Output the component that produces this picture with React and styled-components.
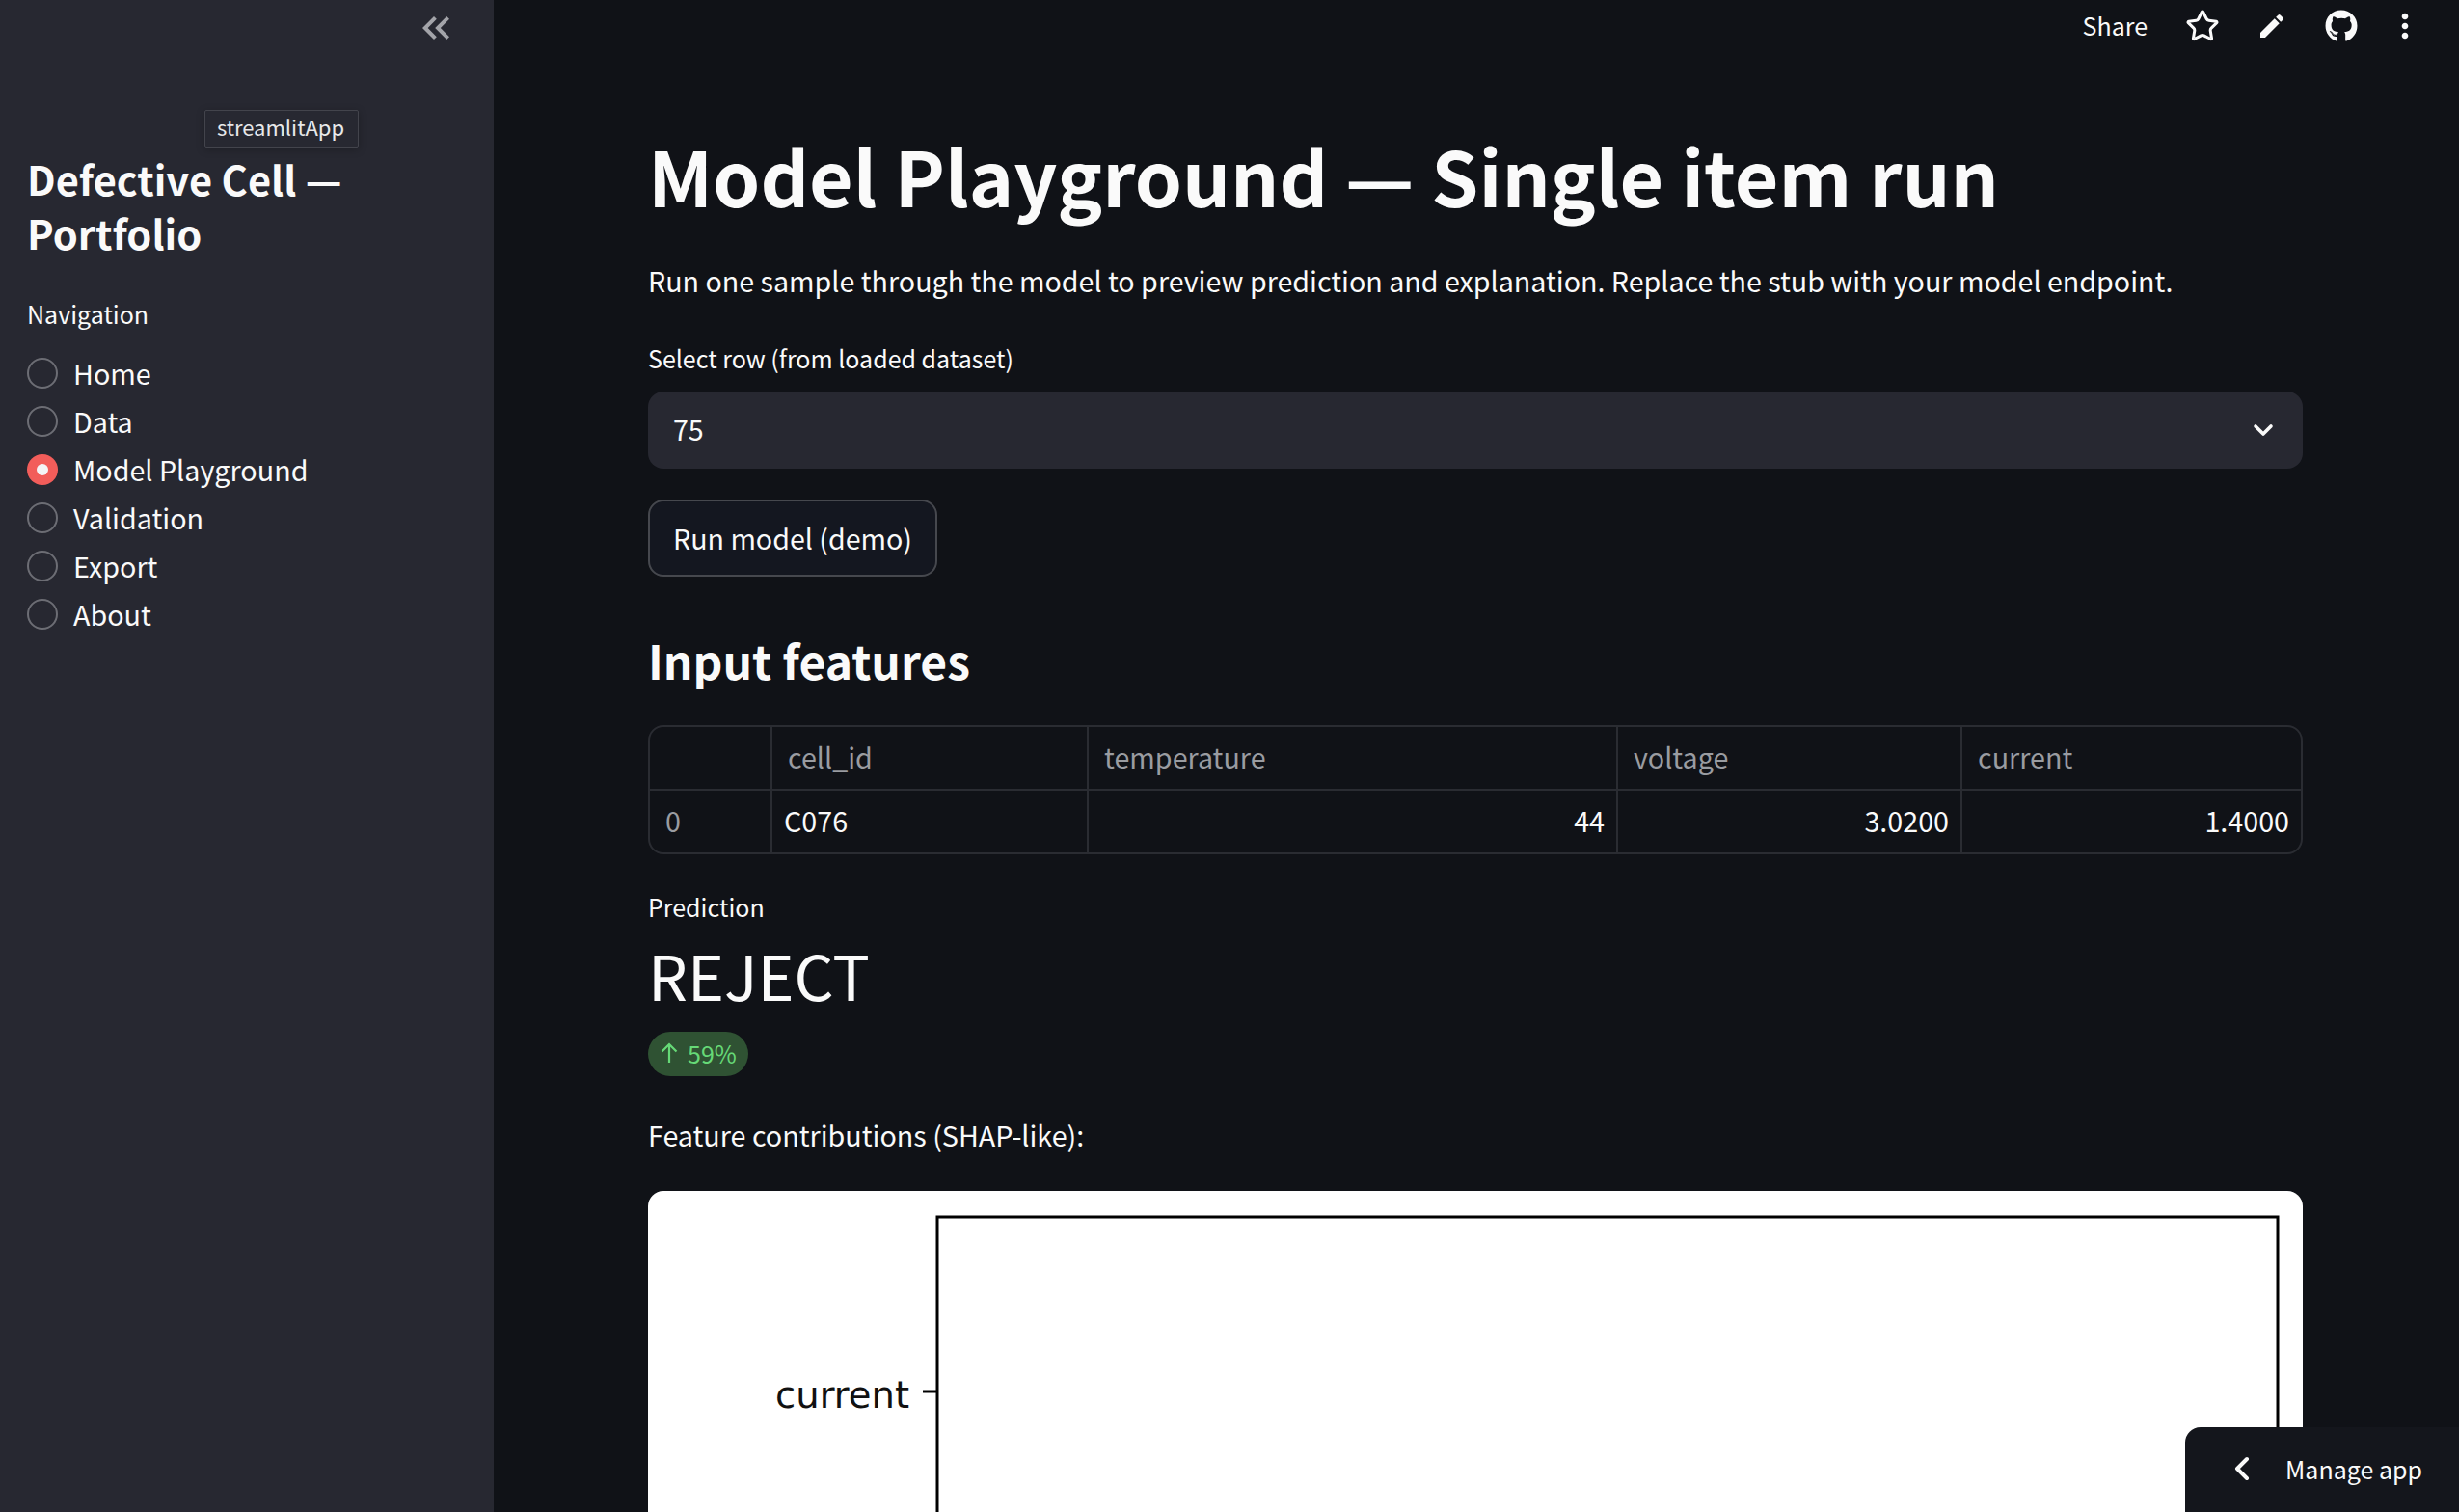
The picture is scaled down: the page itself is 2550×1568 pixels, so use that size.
import React from "react";
import styled, { createGlobalStyle } from "styled-components";
import { MdEdit, MdMoreVert, MdKeyboardDoubleArrowLeft } from "react-icons/md";
import { FaGithub } from "react-icons/fa";
import { Star } from "lucide-react";

const FONT = `"Noto Sans CJK SC", "Source Sans Pro", "Noto Sans", sans-serif`;

const Global = createGlobalStyle`
  html, body { margin: 0; padding: 0; background: #101217; height: 100%; overflow: hidden; }
  * { box-sizing: border-box; }
`;

const Shell = styled.div`
  display: flex;
  position: relative;
  width: 2550px;
  height: 1568px;
  overflow: hidden;
  background: #101217;
  color: #fafafa;
  font-family: ${FONT};
`;

const Sidebar = styled.aside`
  width: 512px;
  flex: none;
  background: #272831;
  padding: 12px 28px 0;
  display: flex;
  flex-direction: column;
  position: relative;
`;

const Collapse = styled.div`
  display: flex;
  justify-content: flex-end;
  padding-right: 8px;
  color: #a3a4a9;
  height: 34px;
  font-size: 48px;
  line-height: 0;
  align-items: center;
  flex: none;
`;

const Tip = styled.div`
  position: absolute;
  left: 212px;
  top: 114px;
  width: 160px;
  height: 39px;
  background: #272831;
  border: 1px solid #43444c;
  border-radius: 2px;
  box-shadow: 0 2px 8px rgba(0,0,0,.25);
  font-size: 22px;
  line-height: 33px;
  text-align: center;
  color: #e8e8ea;
  padding-right: 2px;
`;

const Brand = styled.h2`
  margin: 111px 0 0;
  font-size: 41.6px;
  line-height: 56px;
  font-weight: 600;
  color: #fafafa;
`;

const NavLabel = styled.div`
  margin-top: 38px;
  font-size: 25px;
  line-height: 36px;
  color: #fafafa;
`;

const Radios = styled.div`
  margin-top: 19px;
  display: flex;
  flex-direction: column;
`;

const RadioRow = styled.div`
  display: flex;
  align-items: center;
  gap: 16px;
  height: 50px;
  font-size: 28.7px;
  line-height: 40px;
`;

const Dot = styled.span`
  width: 32px;
  height: 32px;
  border-radius: 50%;
  flex: none;
  display: flex;
  align-items: center;
  justify-content: center;
  background: ${p => (p.$on ? "#f25d5a" : "transparent")};
  border: ${p => (p.$on ? "none" : "2px solid #6c6d74")};
  &::after {
    content: "";
    display: ${p => (p.$on ? "block" : "none")};
    width: 12px;
    height: 12px;
    border-radius: 50%;
    background: #f4f4f6;
  }
`;

const Main = styled.main`
  flex: 1;
  min-width: 0;
  display: flex;
  flex-direction: column;
`;

const Toolbar = styled.header`
  height: 54px;
  flex: none;
  display: flex;
  align-items: center;
  justify-content: flex-end;
  padding-right: 44px;
  color: #fafafa;
`;

const ShareText = styled.span`
  font-size: 25px;
  line-height: 34px;
  margin: 0 39px 2px 0;
`;

const ToolIcon = styled.span`
  display: flex;
  align-items: center;
  justify-content: center;
  width: ${p => p.$w}px;
  margin-right: ${p => p.$mr}px;
  font-size: ${p => p.$size}px;
  svg { flex: none; }
`;

const Content = styled.div`
  padding: 0 162px 0 160px;
  display: flex;
  flex-direction: column;
  flex: none;
`;

const Title = styled.h1`
  margin: 83px 0 0;
  font-size: 78.7px;
  line-height: 88px;
  font-weight: 600;
  white-space: nowrap;
`;

const Lead = styled.p`
  margin: 44px 0 0;
  font-size: 28.65px;
  line-height: 44px;
  white-space: nowrap;
`;

const FieldLabel = styled.div`
  margin-top: 40px;
  font-size: 25px;
  line-height: 36px;
`;

const Select = styled.div`
  margin-top: 17px;
  height: 80px;
  flex: none;
  border-radius: 16px;
  background: #272831;
  display: flex;
  align-items: center;
  justify-content: space-between;
  padding: 0 30px 0 26px;
  font-size: 28.6px;
`;

const SelectValue = styled.span`
  padding-bottom: 3px;
`;

const RunButton = styled.button`
  align-self: flex-start;
  flex: none;
  margin-top: 32px;
  height: 80px;
  width: 300px;
  padding: 0;
  border-radius: 16px;
  border: 2px solid #46484e;
  background: #141720;
  color: #fafafa;
  font: 400 28.6px/44px ${FONT};
`;

const Section = styled.h3`
  margin: 51px 0 0;
  font-size: 48px;
  line-height: 70px;
  font-weight: 600;
`;

const Table = styled.div`
  margin-top: 33px;
  height: 134px;
  flex: none;
  border: 2px solid #2a2c32;
  border-radius: 16px;
  overflow: hidden;
  display: grid;
  grid-template-columns: 127px 328px 549px 357px 1fr;
  grid-template-rows: 66px 1fr;
`;

const Cell = styled.div`
  display: flex;
  align-items: center;
  justify-content: ${p => (p.$num ? "flex-end" : "flex-start")};
  padding: ${p => (p.$pad ? p.$pad : "0 12px 2px")};
  font-size: 28.7px;
  line-height: 40px;
  color: ${p => (p.$muted ? "#9a9ca1" : "#fafafa")};
  border-right: ${p => (p.$last ? "none" : "2px solid #2a2c32")};
  border-bottom: ${p => (p.$head ? "2px solid #2a2c32" : "none")};
`;

const MetricLabel = styled.div`
  margin-top: 36px;
  font-size: 25px;
  line-height: 36px;
`;

const MetricValue = styled.div`
  margin-top: 7px;
  font-size: 64.5px;
  line-height: 90px;
  font-weight: 400;
`;

const Delta = styled.div`
  align-self: flex-start;
  flex: none;
  margin-top: 15px;
  width: 104px;
  height: 46px;
  border-radius: 23px;
  background: #2f5233;
  color: #66d977;
  display: flex;
  align-items: center;
  gap: 9px;
  padding: 0 0 2px 12px;
  font-size: 25px;
`;

const Caption = styled.div`
  margin-top: 39px;
  font-size: 28.7px;
  line-height: 44px;
`;

const ChartCard = styled.div`
  margin-top: 36px;
  height: 400px;
  flex: none;
  background: #fff;
  border-radius: 16px;
  overflow: hidden;
`;

const Manage = styled.div`
  position: absolute;
  right: 0;
  bottom: 0;
  width: 284px;
  height: 88px;
  background: #14161c;
  border-top-left-radius: 16px;
  display: flex;
  align-items: center;
  padding: 0 0 2px 50px;
  gap: 36px;
  font-size: 25px;
  line-height: 36px;
`;

const items = ["Home", "Data", "Model Playground", "Validation", "Export", "About"];

export default function App() {
  return (
    <Shell>
      <Global />
      <Sidebar>
        <Collapse><MdKeyboardDoubleArrowLeft /></Collapse>
        <Tip>streamlitApp</Tip>
        <Brand>Defective Cell —<br />Portfolio</Brand>
        <NavLabel>Navigation</NavLabel>
        <Radios>
          {items.map(t => (
            <RadioRow key={t}>
              <Dot $on={t === "Model Playground"} />
              <span>{t}</span>
            </RadioRow>
          ))}
        </Radios>
      </Sidebar>
      <Main>
        <Toolbar>
          <ShareText>Share</ShareText>
          <ToolIcon $w={36} $mr={38} $size={36}><Star size={36} strokeWidth={2} /></ToolIcon>
          <ToolIcon $w={32} $mr={38} $size={32}><MdEdit /></ToolIcon>
          <ToolIcon $w={36} $mr={36} $size={34}><FaGithub /></ToolIcon>
          <ToolIcon $w={24} $mr={0} $size={40}><MdMoreVert /></ToolIcon>
        </Toolbar>
        <Content>
          <Title>Model Playground — Single item run</Title>
          <Lead>Run one sample through the model to preview prediction and explanation. Replace the stub with your model endpoint.</Lead>
          <FieldLabel>Select row (from loaded dataset)</FieldLabel>
          <Select>
            <SelectValue>75</SelectValue>
            <svg width="22" height="14" viewBox="0 0 22 14" fill="none" stroke="#fafafa" strokeWidth="3.6" strokeLinecap="round" strokeLinejoin="round"><path d="M3 3l8 8 8-8" /></svg>
          </Select>
          <RunButton>Run model (demo)</RunButton>
          <Section>Input features</Section>
          <Table>
            <Cell $head />
            <Cell $head $muted $pad="0 16px 2px">cell_id</Cell>
            <Cell $head $muted $pad="0 16px 2px">temperature</Cell>
            <Cell $head $muted $pad="0 16px 2px">voltage</Cell>
            <Cell $head $muted $last $pad="0 16px 2px">current</Cell>
            <Cell $muted $pad="0 16px 2px">0</Cell>
            <Cell>C076</Cell>
            <Cell $num>44</Cell>
            <Cell $num>3.0200</Cell>
            <Cell $num $last>1.4000</Cell>
          </Table>
          <MetricLabel>Prediction</MetricLabel>
          <MetricValue>REJECT</MetricValue>
          <Delta>
            <svg width="20" height="24" viewBox="0 0 20 24" fill="none" stroke="#66d977" strokeWidth="2.2"><path d="M10 22V3M2.5 10.5L10 3l7.5 7.5" /></svg>
            <span>59%</span>
          </Delta>
          <Caption>Feature contributions (SHAP-like):</Caption>
          <ChartCard>
            <svg width="1716" height="400" viewBox="0 0 1716 400">
              <rect x="300" y="27" width="1390" height="400" fill="none" stroke="#000" strokeWidth="3" />
              <path d="M285 208H300" stroke="#000" strokeWidth="3" />
              <text x="271" y="225" textAnchor="end" fontFamily="'DejaVu Sans', sans-serif" fontSize="38.5" fill="#111">current</text>
            </svg>
          </ChartCard>
        </Content>
      </Main>
      <Manage>
        <svg width="18" height="26" viewBox="0 0 18 26" fill="none" stroke="#fafafa" strokeWidth="4" strokeLinecap="round" strokeLinejoin="round"><path d="M14 3L4 13l10 10" /></svg>
        <span>Manage app</span>
      </Manage>
    </Shell>
  );
}
